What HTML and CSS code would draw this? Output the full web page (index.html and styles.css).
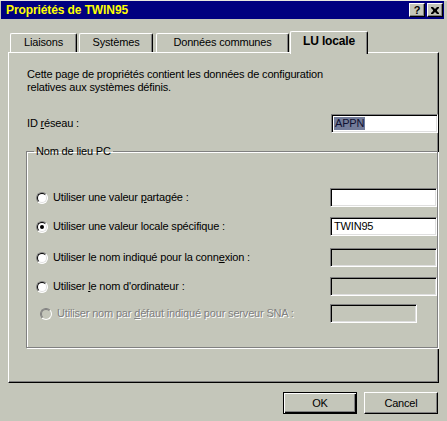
FILE: index.html
```html
<!DOCTYPE html>
<html lang="fr">
<head>
<meta charset="utf-8">
<title>Propriétés de TWIN95</title>
<link rel="stylesheet" href="styles.css">
</head>
<body>
<div class="window">
  <div class="titlebar">
    <span class="title">Propriétés de TWIN95</span>
    <div class="tbtns">
      <span class="tbtn help">?</span>
      <span class="tbtn close"><svg width="8" height="7" viewBox="0 0 8 7"><path d="M0 0h2l2 2 2-2h2v1l-2 2v1l2 2v1h-2l-2-2-2 2h-2v-1l2-2v-1l-2-2z" fill="#000"/></svg></span>
    </div>
  </div>
  <div class="tabs">
    <div class="tab t1">Liaisons</div>
    <div class="tab t2">Systèmes</div>
    <div class="tab t3">Données communes</div>
    <div class="tab sel">LU locale</div>
  </div>
  <div class="panel">
    <p class="desc">Cette page de propriétés contient les données de configuration<br>relatives aux systèmes définis.</p>
    <div class="idrow">
      <span>ID <u>r</u>éseau :</span>
      <div class="field"><span class="hl">APPN</span></div>
    </div>
    <fieldset class="group">
      <legend>Nom de lieu PC</legend>
      <div class="opt r1">
        <span class="radio"></span><span class="lbl">Utiliser une valeur <u>p</u>artagée :</span>
        <div class="field"></div>
      </div>
      <div class="opt r2">
        <span class="radio on"></span><span class="lbl">Utiliser une valeur locale spécifique :</span>
        <div class="field"><span class="val">TWIN95</span></div>
      </div>
      <div class="opt r3">
        <span class="radio"></span><span class="lbl">Utiliser le nom indiqué pour la conn<u>e</u>xion :</span>
        <div class="field off"></div>
      </div>
      <div class="opt r4">
        <span class="radio"></span><span class="lbl">Utiliser <u>l</u>e nom d'ordinateur :</span>
        <div class="field off"></div>
      </div>
      <div class="opt r5 dis">
        <span class="radio"></span><span class="lbl">Utiliser nom par <u>d</u>éfaut indiqué pour serveur SNA :</span>
        <div class="field off short"></div>
      </div>
    </fieldset>
  </div>
  <div class="buttons">
    <div class="btn def"><span>OK</span></div>
    <div class="btn"><span>Cancel</span></div>
  </div>
</div>
</body>
</html>
```
FILE: styles.css
```css
html, body { margin: 0; padding: 0; }
body {
  background: #c4c6ba;
  font-family: "Liberation Sans", Arial, sans-serif;
  font-size: 11px;
  line-height: 13px;
  letter-spacing: -0.17px;
  color: #000;
}
.window {
  width: 447px;
  height: 421px;
  box-sizing: border-box;
  border-top: 1px solid #e8e8e0;
  display: flex;
  flex-direction: column;
}
.titlebar {
  height: 18px;
  margin: 0 3px 0 1px;
  background: #000080;
  display: flex;
  align-items: center;
  padding: 0 1px 0 5px;
}
.title {
  color: #ffff00;
  font-weight: bold;
  font-size: 12px;
  letter-spacing: -0.1px;
  flex: 1;
}
.tbtns { display: flex; gap: 2px; }
.tbtn {
  width: 16px;
  height: 14px;
  box-sizing: border-box;
  background: #c4c6ba;
  border: 1px solid;
  border-color: #fff #000 #000 #fff;
  box-shadow: inset -1px -1px #808080;
  display: flex;
  align-items: center;
  justify-content: center;
  font-weight: bold;
  font-size: 11px;
}
.tabs {
  margin-top: 12px;
  height: 21px;
  display: flex;
  align-items: flex-end;
  padding-left: 10px;
}
.tab {
  height: 19px;
  box-sizing: border-box;
  border-top: 1px solid #fff;
  border-left: 1px solid #fff;
  border-right: 1px solid #000;
  border-top-left-radius: 2px;
  border-top-right-radius: 2px;
  box-shadow: inset -1px 0 #808080;
  display: flex;
  align-items: center;
  justify-content: center;
  padding-bottom: 1px;
}
.t1 { width: 67px; }
.t2 { width: 74px; margin-left: 2px; }
.t3 { width: 133px; margin-left: 3px; }
.tab.sel {
  width: 78px;
  height: 23px;
  margin-left: 1px;
  margin-bottom: -2px;
  position: relative;
  z-index: 1;
  background: #c4c6ba;
  font-weight: bold;
  font-size: 12px;
  padding-bottom: 4px;
}
.panel {
  margin-left: 8px;
  width: 431px;
  height: 331px;
  box-sizing: border-box;
  border: 1px solid;
  border-color: #fff #000 #000 #fff;
  box-shadow: inset -1px -1px #808080;
  padding: 15px 0 0 18px;
  display: flex;
  flex-direction: column;
}
.desc { margin: 0; }
.idrow {
  margin-top: 20px;
  height: 19px;
  display: flex;
  align-items: center;
}
.field {
  margin-left: auto;
  width: 107px;
  height: 19px;
  box-sizing: border-box;
  border: 1px solid;
  border-color: #808080 #fff #fff #808080;
  box-shadow: inset 1px 1px #000, inset -1px -1px #dfdfdf;
  background: #fff;
  display: flex;
  align-items: center;
  padding-left: 2px;
}
.field.off { background: #c4c6ba; }
.field.short { width: 87px; margin-right: 20px; }
.hl { background: #737c9a; color: #101030; padding: 0 1px; }
.val { padding-left: 1px; }
.group {
  margin: 12px 0 0 -1px;
  padding: 0 0 24px 0;
  border: 1px solid #808080;
  box-shadow: inset 1px 1px #fff, 1px 1px #fff;
  min-width: 0;
}
.group legend {
  margin-left: 7px;
  padding: 0 2px;
  line-height: 13px;
}
.opt {
  display: flex;
  align-items: center;
  height: 19px;
  padding-left: 9px;
}
.r1 { margin-top: 30px; }
.r2 { margin-top: 10px; }
.r3 { margin-top: 12px; }
.r4 { margin-top: 10px; }
.r5 { margin-top: 8px; padding-left: 13px; }
.radio {
  width: 12px;
  height: 12px;
  box-sizing: border-box;
  border-radius: 50%;
  border: 1px solid;
  border-color: #808080 #fff #fff #808080;
  background: #fff;
  margin-right: 5px;
  position: relative;
  flex: none;
}
.radio::before {
  content: "";
  position: absolute;
  inset: 0;
  border-radius: 50%;
  border: 1px solid;
  border-color: #000 #dfdfdf #dfdfdf #000;
}
.radio.on::after {
  content: "";
  position: absolute;
  left: 3px;
  top: 3px;
  width: 4px;
  height: 4px;
  border-radius: 50%;
  background: #000;
}
.dis .radio { background: #c4c6ba; }
.dis .radio::before { border-color: #808080 transparent transparent #808080; }
.dis .lbl { color: #808080; text-shadow: 1px 1px #fff; }
.buttons {
  margin-top: 9px;
  display: flex;
  justify-content: flex-end;
  gap: 7px;
  padding-right: 9px;
}
.btn {
  width: 74px;
  height: 22px;
  box-sizing: border-box;
  border: 1px solid;
  border-color: #fff #000 #000 #fff;
  box-shadow: inset -1px -1px #808080;
  display: flex;
  align-items: center;
  justify-content: center;
}
.btn.def {
  border: 1px solid #000;
  box-shadow: inset 1px 1px #fff, inset -1px -1px #000, inset -2px -2px #808080;
}
```
